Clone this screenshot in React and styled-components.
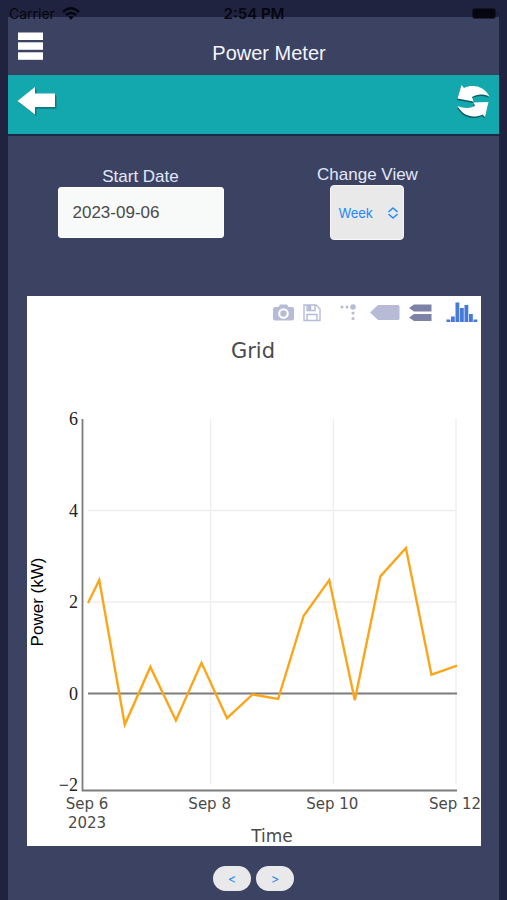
import React, { useState } from 'react';
import styled, { createGlobalStyle } from 'styled-components';

const GlobalStyle = createGlobalStyle`
  * {
    box-sizing: border-box;
  }

  body {
    margin: 0;
    background: #20233f;
    font-family: 'Liberation Sans', Arial, sans-serif;
  }

  button {
    padding: 0;
    border: 0;
    background: none;
    cursor: pointer;
  }

  svg {
    display: block;
  }
`;

const Page = styled.div`
  position: relative;
  min-height: 100vh;
  padding: 17px 8px 1px;
`;

const StatusBar = styled.div`
  position: absolute;
  top: 0;
  left: 0;
  right: 0;
  display: grid;
  grid-template-columns: 1fr auto 1fr;
  align-items: center;
  height: 27px;
  padding: 0 8px 0 9px;
  color: #05060f;
  font-family: Inter, sans-serif;
  font-size: 14px;
`;

const Carrier = styled.div`
  display: flex;
  align-items: center;
  gap: 7px;
`;

const Clock = styled.time`
  font-size: 15px;
  font-weight: 600;
`;

const Battery = styled.svg`
  justify-self: end;
`;

const Panel = styled.div`
  min-height: calc(100vh - 18px);
  padding-bottom: 9px;
  background: #3b4262;
`;

const Header = styled.header`
  display: flex;
  align-items: flex-start;
  height: 58px;
  padding: 15px 4px 0 10px;
`;

const Title = styled.h1`
  flex: 1;
  margin: 0;
  padding-top: 9px;
  color: #f4f5fc;
  font-size: 20px;
  font-weight: 400;
  line-height: 24px;
  text-align: center;
`;

const Toolbar = styled.nav`
  display: flex;
  align-items: flex-start;
  justify-content: space-between;
  height: 61px;
  padding: 9px 8px 0;
  background: #13a8ad;
  border-bottom: 2px solid #1d2a47;
`;

const Controls = styled.div`
  display: grid;
  grid-template-columns: 1fr 1fr;
  align-items: center;
  justify-items: center;
  margin: 0 18px 0 19px;
  padding: 29px 0 56px;
`;

const Field = styled.div`
  display: flex;
  flex-direction: column;
  align-items: center;
`;

const Label = styled.label`
  color: #e3e8fa;
  font-size: 17px;
  line-height: 20px;
`;

const DateInput = styled.input`
  width: 166px;
  height: 51px;
  padding: 0 14px;
  border: 1px solid #fff;
  border-radius: 3px;
  background: #f8f9f9;
  color: #4a4a4a;
  font-family: inherit;
  font-size: 17px;
`;

const SelectBox = styled.div`
  position: relative;
`;

const Select = styled.select`
  appearance: none;
  width: 74px;
  height: 55px;
  padding: 0 7px;
  border: 1px solid #f6f6f8;
  border-radius: 4px;
  background: #e9e9ea;
  color: #2388f2;
  font-family: Inter, sans-serif;
  font-size: 13px;
`;

const SelectArrows = styled.svg`
  position: absolute;
  top: 22px;
  right: 6px;
  pointer-events: none;
`;

const ChartCard = styled.section`
  margin: 0 18px 0 19px;
  background: #fff;
`;

const ModeBar = styled.div`
  display: flex;
  justify-content: flex-end;
  gap: 14px;
  height: 32px;
  padding: 5px 3px 0 0;
`;

const ModeGroup = styled.div`
  display: flex;
  gap: 9px;
`;

const ModeButton = styled.button`
  height: 22px;
  color: ${(props) => (props.$active ? '#7d82a6' : '#b7bbd6')};
`;

const LogoLink = styled.a`
  color: #4778dc;
`;

const Plot = styled.svg`
  width: 100%;
  height: auto;
`;

const TickText = styled.text`
  fill: #4a4a4a;
  font-family: 'DejaVu Sans', Verdana, sans-serif;
  font-size: ${(props) => props.$size || 15}px;
  text-anchor: middle;
`;

const YTick = styled.text`
  fill: #222;
  font-family: 'Liberation Serif', 'Times New Roman', serif;
  font-size: 18px;
  text-anchor: end;
`;

const AxisTitle = styled.text`
  fill: #000;
  font-family: 'Liberation Sans', Arial, sans-serif;
  font-size: 17px;
  text-anchor: middle;
`;

const Pager = styled.div`
  display: flex;
  justify-content: center;
  gap: 5px;
  padding-top: 20px;
`;

const PagerButton = styled.button`
  width: 38px;
  height: 25px;
  border-radius: 13px;
  background: #e9e9eb;
  color: #2388f2;
  font-family: Inter, sans-serif;
  font-size: 13px;
`;

// hours since Sep 6 00:00, power in kW
const readings = [
  [0, 1.98],
  [4.4, 2.48],
  [14.4, -0.68],
  [24.4, 0.58],
  [34.4, -0.59],
  [44.4, 0.67],
  [54.4, -0.54],
  [64.4, -0.02],
  [74.4, -0.12],
  [84.4, 1.7],
  [94.4, 2.48],
  [104.4, -0.15],
  [114.4, 2.56],
  [124.4, 3.18],
  [134.4, 0.41],
  [144.4, 0.61],
];

const days = [
  { hour: 0, label: 'Sep 6' },
  { hour: 48, label: 'Sep 8' },
  { hour: 96, label: 'Sep 10' },
  { hour: 144, label: 'Sep 12' },
];

const xScale = (hour) => 61 + (hour * 368) / 144;
const yScale = (kw) => 365.5 - kw * 45.75;

const PowerChart = () => {
  const line = readings.map(([hour, kw]) => `${xScale(hour)},${yScale(kw)}`).join(' ');

  return (
    <Plot viewBox="0 0 454 518" role="img" aria-label="Grid">
      <TickText $size={21} x="226" y="30">Grid</TickText>

      <g stroke="#eeeeee" strokeWidth="1.3">
        {days.slice(1).map((day) => (
          <line key={day.hour} x1={xScale(day.hour)} x2={xScale(day.hour)} y1="91" y2="456" />
        ))}
        {[2, 4].map((kw) => (
          <line key={kw} x1="61" x2="430" y1={yScale(kw)} y2={yScale(kw)} />
        ))}
      </g>

      <g stroke="#7c7c7c" strokeWidth="1.8">
        <line x1="61" x2="430" y1={yScale(0)} y2={yScale(0)} />
        <path d="M55.5 91V462.5H430" fill="none" />
      </g>

      <polyline points={line} fill="none" stroke="#fba61a" strokeWidth="2.4" />

      {[6, 4, 2, 0, -2].map((kw) => (
        <YTick key={kw} x="51" y={yScale(kw) + 6}>
          {kw < 0 ? `−${-kw}` : kw}
        </YTick>
      ))}
      {days.map((day) => (
        <TickText key={day.hour} x={xScale(day.hour) - 1} y="481">{day.label}</TickText>
      ))}
      <TickText x="60" y="500">2023</TickText>
      <TickText $size={17} x="245" y="514">Time</TickText>
      <AxisTitle transform="translate(16 274) rotate(-90)">Power (kW)</AxisTitle>
    </Plot>
  );
};

const RefreshArrows = () => (
  <>
    <path d="M5.500 1L8 4C17 0 28 2 33.500 12.500C27 9.500 21 10 16 13L17.500 17.500L1.500 14.500Z" />
    <path d="M32.500 18L29 33L26.500 30.500C17 35 7 32 1.500 22C8 24.500 14 24.500 19 22L17.500 18.500Z" />
  </>
);

const App = () => {
  const [startDate, setStartDate] = useState('2023-09-06');
  const [view, setView] = useState('Week');

  return (
    <Page>
      <GlobalStyle />
      <Panel>
        <Header>
          <button type="button" aria-label="Menu">
            <svg width="25" height="28" fill="#fff">
              <rect y="0.500" width="25" height="7.500" />
              <rect y="10.300" width="25" height="7.500" />
              <rect y="20.300" width="25" height="7.500" />
            </svg>
          </button>
          <Title>Power Meter</Title>
        </Header>

        <Toolbar>
          <button type="button" aria-label="Back">
            <svg width="42" height="34" viewBox="0 0 42 34">
              <path d="M3 19L21 5V12H41V25H21V32Z" fill="#0b5f68" opacity="0.3" />
              <path d="M2 18L20 4V10.500H40V24.500H20V31.500Z" fill="#0b5f68" opacity="0.5" />
              <path d="M1.500 17L19 3V9.500H39V23H19V30.500Z" fill="#fff" />
            </svg>
          </button>
          <button type="button" aria-label="Refresh">
            <svg width="35" height="36" viewBox="0 0 35 36">
              <g fill="#0c4f5a" opacity="0.85" transform="translate(-0.500 1.500)">
                <RefreshArrows />
              </g>
              <g fill="#fff">
                <RefreshArrows />
              </g>
            </svg>
          </button>
        </Toolbar>

        <Controls>
          <Field>
            <Label htmlFor="start-date">Start Date</Label>
            <DateInput
              id="start-date"
              type="text"
              value={startDate}
              onChange={(e) => setStartDate(e.target.value)}
            />
          </Field>
          <Field>
            <Label htmlFor="view">Change View</Label>
            <SelectBox>
              <Select id="view" value={view} onChange={(e) => setView(e.target.value)}>
                <option>Day</option>
                <option>Week</option>
                <option>Month</option>
              </Select>
              <SelectArrows width="10" height="12" fill="none" stroke="#2388f2" strokeWidth="1.6" strokeLinecap="round" strokeLinejoin="round">
                <path d="M1 4.500L5 1L9 4.500M1 7.500L5 11L9 7.500" />
              </SelectArrows>
            </SelectBox>
          </Field>
        </Controls>

        <ChartCard>
          <ModeBar>
            <ModeGroup>
              <ModeButton type="button" aria-label="Download plot">
                <svg width="21" height="22" fill="currentColor">
                  <path fillRule="evenodd" d="M2 6H5.500L7 3.500H14L15.500 6H19Q21 6 21 8V17.500Q21 19.500 19 19.500H2Q0 19.500 0 17.500V8Q0 6 2 6ZM10.500 7.200A5.300 5.300 0 1 0 10.500 17.800A5.300 5.300 0 1 0 10.500 7.200Z" />
                  <circle cx="10.500" cy="12.500" r="3.200" />
                </svg>
              </ModeButton>
              <ModeButton type="button" aria-label="Save">
                <svg width="18" height="22" fill="none" stroke="currentColor" strokeWidth="1.4">
                  <path d="M1 4H13L17 8V19.500H1Z" />
                  <path d="M4 4V9.500H12V4M4 19.500V13.500H14V19.500" />
                  <path d="M6.500 4V9" strokeWidth="3.500" />
                </svg>
              </ModeButton>
            </ModeGroup>
            <ModeGroup>
              <ModeButton type="button" aria-label="Toggle spike lines">
                <svg width="26" height="22" fill="currentColor">
                  <circle cx="7" cy="6" r="1.500" />
                  <circle cx="12" cy="6" r="1.500" />
                  <circle cx="18" cy="6" r="2.800" />
                  <circle cx="18" cy="12" r="1.600" />
                  <circle cx="18" cy="17.500" r="1.600" />
                </svg>
              </ModeButton>
              <ModeButton type="button" aria-label="Show closest">
                <svg width="30" height="22" fill="currentColor">
                  <path d="M0 11.500L8 4H28Q29.500 4 29.500 5.500V17.500Q29.500 19 28 19H8Z" />
                </svg>
              </ModeButton>
              <ModeButton type="button" aria-label="Compare data" $active>
                <svg width="23" height="22" fill="currentColor">
                  <path d="M0 7L5 3.500H22.500V10.500H5ZM0 16.500L5 13H22.500V20H5Z" />
                </svg>
              </ModeButton>
            </ModeGroup>
            <LogoLink href="#plotly" aria-label="Plotly">
              <svg width="32" height="22" fill="currentColor">
                {[2.5, 5.5, 19.5, 14, 17, 8, 2.5].map((height, i) => (
                  <rect key={i} x={0.5 + i * 4.5} y={21 - height} width="3.800" height={height} />
                ))}
              </svg>
            </LogoLink>
          </ModeBar>
          <PowerChart />
        </ChartCard>

        <Pager>
          <PagerButton type="button" aria-label="Previous">&lt;</PagerButton>
          <PagerButton type="button" aria-label="Next">&gt;</PagerButton>
        </Pager>
      </Panel>

      <StatusBar>
        <Carrier>
          Carrier
          <svg width="18" height="13" viewBox="0 0 18 13" fill="none" stroke="currentColor" strokeWidth="2.500">
            <path d="M1 5Q9 -2.500 17 5M4 8.200Q9 3.500 14 8.200" />
            <path d="M9 12.800L6.300 10Q9 7.800 11.700 10Z" fill="currentColor" stroke="none" />
          </svg>
        </Carrier>
        <Clock>2:54 PM</Clock>
        <Battery width="27" height="11" fill="currentColor">
          <rect x="0" y="0" width="24" height="11" rx="3" opacity="0.5" />
          <rect x="1" y="1" width="22" height="9" rx="2" />
          <path d="M25 3.500Q27 5.500 25 7.500Z" opacity="0.5" />
        </Battery>
      </StatusBar>
    </Page>
  );
};

export default App;
